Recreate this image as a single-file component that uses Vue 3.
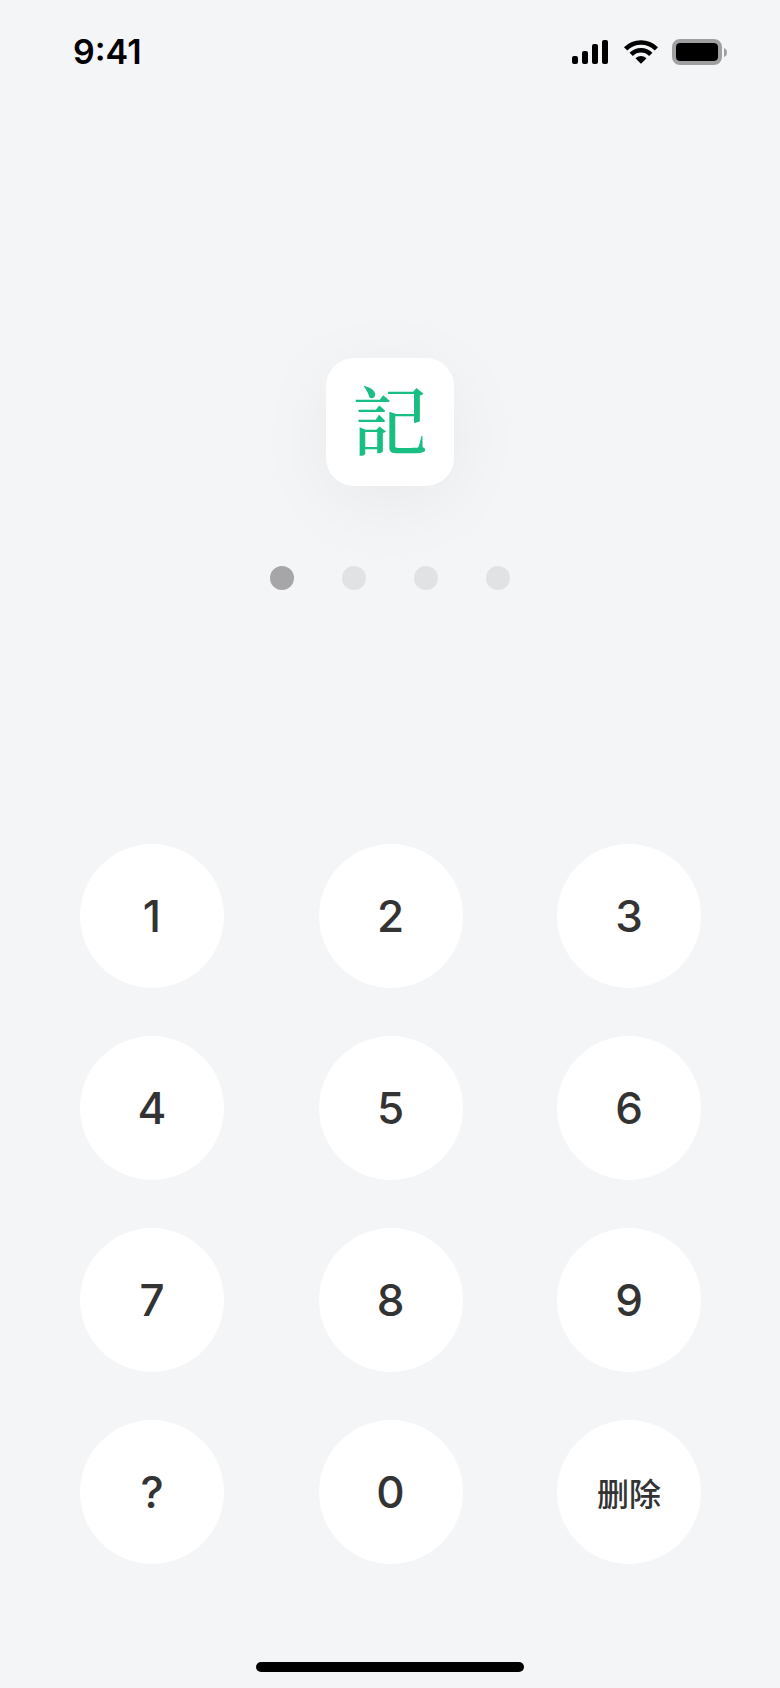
<script setup>
import { ref } from 'vue'

const length = 4
const code = ref('1')
const keys = ['1', '2', '3', '4', '5', '6', '7', '8', '9', '?', '0', '删除']

function press(key) {
  if (key === '删除') {
    code.value = code.value.slice(0, -1)
  } else if (key !== '?' && code.value.length < length) {
    code.value += key
  }
}
</script>

<template>
  <div class="page">
    <header class="status">
      <span class="time">9:41</span>
      <div class="icons">
        <svg width="36" height="24" viewBox="0 0 36 24">
          <rect x="0" y="16" width="6" height="8" rx="2" />
          <rect x="10" y="11" width="6" height="13" rx="2" />
          <rect x="20" y="4" width="6" height="20" rx="2" />
          <rect x="30" y="0" width="6" height="24" rx="2" />
        </svg>
        <svg width="36" height="24" viewBox="0 0 36 24">
          <g fill="none" stroke="#000">
            <path d="M3.6 8.8A21.8 21.8 0 0 1 34.4 8.8" stroke-width="4.6" />
            <path d="M9.2 14.4A13.8 13.8 0 0 1 28.8 14.4" stroke-width="4.6" />
          </g>
          <path d="M13.5 18.2Q19 13.8 24.5 18.2L19.6 23.2Q19 23.8 18.4 23.2Z" />
        </svg>
        <svg width="56" height="26" viewBox="0 0 56 26">
          <rect x="2" y="2" width="46" height="22" rx="6" fill="none" stroke="#a0a0a2" stroke-width="4" />
          <rect x="4" y="4" width="42" height="18" rx="4" />
          <path d="M52 9Q55 10 55 13.5T52 18Z" fill="#a0a0a2" />
        </svg>
      </div>
    </header>

    <main>
      <div class="logo">記</div>
      <div class="dots">
        <i v-for="n in length" :key="n" class="dot" :class="{ filled: n <= code.length }"></i>
      </div>
      <div class="keypad">
        <button
          v-for="key in keys"
          :key="key"
          type="button"
          class="key"
          :class="{ small: key === '删除' }"
          @click="press(key)"
        >
          {{ key }}
        </button>
      </div>
    </main>

    <div class="home"></div>
  </div>
</template>

<style>
body {
  background: #f4f5f7;
}
</style>

<style scoped>
.page {
  box-sizing: border-box;
  display: flex;
  flex-direction: column;
  min-height: 100vh;
  padding-bottom: 16px;
  background: #f4f5f7;
  font-family: Inter, 'Noto Sans CJK SC', sans-serif;
}

.status {
  display: flex;
  align-items: center;
  justify-content: space-between;
  height: 104px;
  padding: 0 52px 0 73px;
}

.time {
  font-size: 34px;
  font-weight: 600;
  line-height: 40px;
}

.icons {
  display: flex;
  align-items: center;
  gap: 14px;
}

main {
  display: flex;
  flex-direction: column;
  align-items: center;
  padding-top: 254px;
}

.logo {
  width: 128px;
  height: 128px;
  border-radius: 28px;
  background: #fff;
  box-shadow: 0 16px 80px rgba(0, 0, 0, 0.05);
  color: #19be82;
  font-family: 'Noto Serif CJK TC', 'Noto Sans CJK TC', serif;
  font-size: 76px;
  font-weight: 500;
  line-height: 120px;
  text-align: center;
}

.dots {
  display: flex;
  gap: 48px;
  margin-top: 80px;
}

.dot {
  width: 24px;
  height: 24px;
  border-radius: 50%;
  background: #e1e2e4;
}

.dot.filled {
  background: #a6a6a8;
}

.keypad {
  box-sizing: border-box;
  display: grid;
  grid-template-columns: repeat(3, 144px);
  justify-content: space-between;
  row-gap: 48px;
  width: 100%;
  margin-top: 254px;
  padding: 0 79px 0 80px;
}

.key {
  height: 144px;
  padding: 0;
  border: none;
  border-radius: 50%;
  background: #fff;
  color: #333;
  font-family: inherit;
  font-size: 44px;
  font-weight: 500;
  cursor: pointer;
}

.key.small {
  font-size: 32px;
}

.home {
  width: 268px;
  height: 10px;
  margin: auto auto 0;
  border-radius: 5px;
  background: #000;
}
</style>
